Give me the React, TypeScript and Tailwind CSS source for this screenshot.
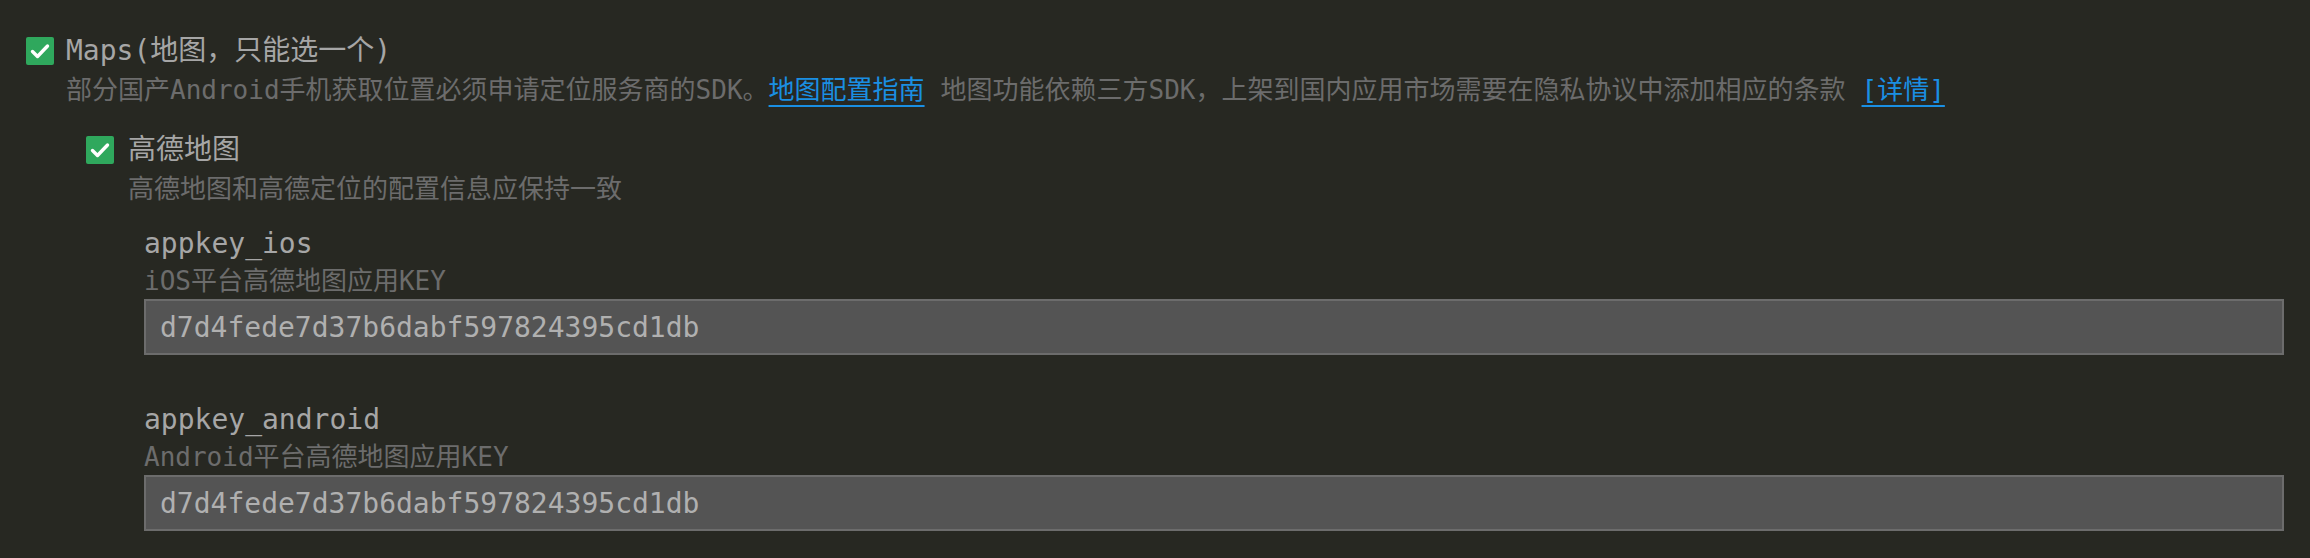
import React from "react";

const MONO = "font-[family-name:'DejaVu_Sans_Mono','Noto_Sans_CJK_SC',monospace]";

function CheckBox() {
  return (
    <div className="w-[28px] h-[28px] shrink-0 rounded-[2px] bg-[#2fa85d] flex items-center justify-center">
      <svg width="28" height="28" viewBox="0 0 28 28" fill="none">
        <polyline
          points="6.5,14.5 11.5,19.5 21.5,9"
          stroke="#ffffff"
          strokeWidth="3.4"
          strokeLinecap="round"
          strokeLinejoin="round"
        />
      </svg>
    </div>
  );
}

interface FieldProps {
  name: string;
  hint: string;
  value: string;
  className?: string;
}

function KeyField({ name, hint, value, className }: FieldProps) {
  return (
    <div className={className}>
      <div className="h-[40px] leading-[40px] text-[28px] text-[#a6a6a6]">{name}</div>
      <div className="h-[34px] leading-[34px] text-[26px] text-[#6c6c6c]">{hint}</div>
      <input
        defaultValue={value}
        readOnly
        className="mt-[1px] block w-full h-[56px] border-2 border-[#6c6c6c] bg-[#545454] px-[14px] text-[28px] text-[#b0b0b0] outline-none"
      />
    </div>
  );
}

export default function App() {
  return (
    <div className={`min-h-screen bg-[#272822] px-[26px] pt-[31px] ${MONO}`}>
      <div className="flex items-center gap-[12px] h-[40px]">
        <CheckBox />
        <span className="text-[28px] leading-[40px] text-[#a6a6a6]">Maps(地图，只能选一个)</span>
      </div>
      <div className="pl-[40px] text-[26px] leading-[38px] text-[#6c6c6c] whitespace-nowrap">
        部分国产Android手机获取位置必须申请定位服务商的SDK。
        <span className="text-[#1a8fe3] underline decoration-2 underline-offset-[6px]">地图配置指南</span>
        <span className="ml-[16px]">地图功能依赖三方SDK，上架到国内应用市场需要在隐私协议中添加相应的条款</span>
        <span className="ml-[16px] text-[#1a8fe3] underline decoration-2 underline-offset-[6px]">[详情]</span>
      </div>

      <div className="pl-[60px] mt-[21px]">
        <div className="flex items-center gap-[14px] h-[40px]">
          <CheckBox />
          <span className="text-[28px] leading-[40px] text-[#a6a6a6]">高德地图</span>
        </div>
        <div className="pl-[42px] text-[26px] leading-[38px] text-[#6c6c6c]">高德地图和高德定位的配置信息应保持一致</div>

        <div className="pl-[58px] mt-[16px]">
          <KeyField name="appkey_ios" hint="iOS平台高德地图应用KEY" value="d7d4fede7d37b6dabf597824395cd1db" />
          <KeyField
            className="mt-[45px]"
            name="appkey_android"
            hint="Android平台高德地图应用KEY"
            value="d7d4fede7d37b6dabf597824395cd1db"
          />
        </div>
      </div>
    </div>
  );
}
